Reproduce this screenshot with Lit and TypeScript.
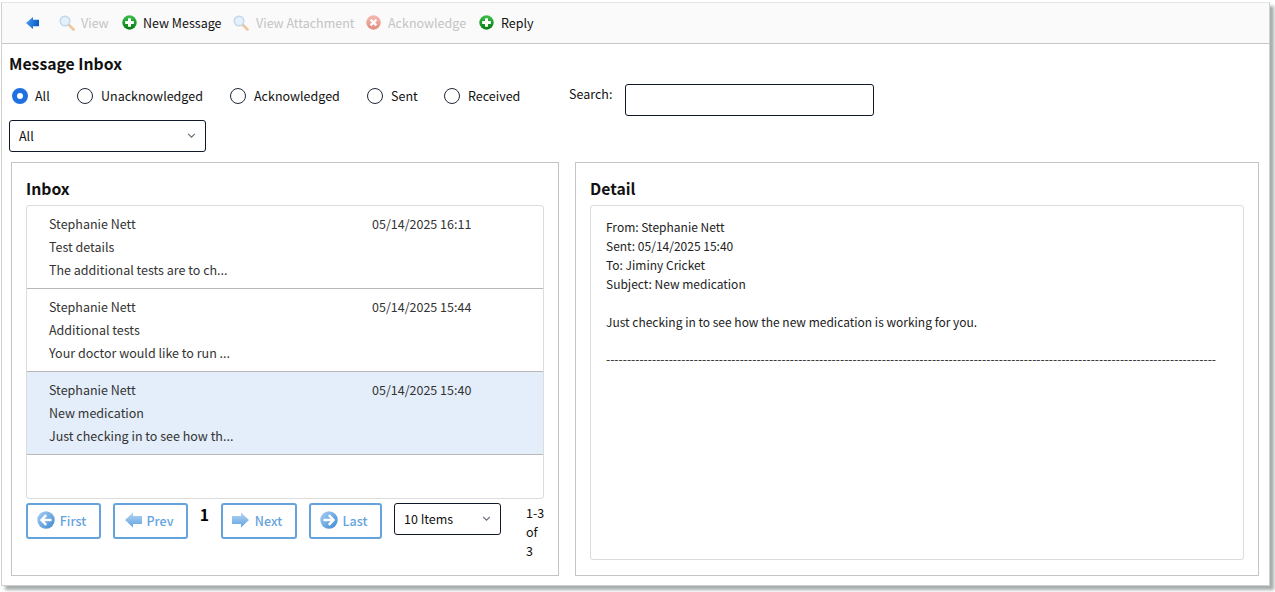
import { LitElement, html, css, svg } from "lit";
import { customElement } from "lit/decorators.js";

const defs = svg`<defs>
  <linearGradient id="blue" x1="0" y1="0" x2="1" y2="0.3"><stop offset="0" stop-color="#4fa0f0"/><stop offset="1" stop-color="#0b5fc8"/></linearGradient>
  <linearGradient id="soft" x1="0" y1="0" x2="0" y2="1"><stop offset="0" stop-color="#b5d6f4"/><stop offset="1" stop-color="#62a3e0"/></linearGradient>
  <linearGradient id="green" x1="0" y1="0" x2="0" y2="1"><stop offset="0" stop-color="#3cc04a"/><stop offset="1" stop-color="#067a12"/></linearGradient>
  <linearGradient id="red" x1="0" y1="0" x2="0" y2="1"><stop offset="0" stop-color="#f2907e"/><stop offset="1" stop-color="#d2432c"/></linearGradient>
  <linearGradient id="circ" x1="0" y1="0" x2="1" y2="1"><stop offset="0" stop-color="#a9d0f4"/><stop offset="1" stop-color="#3f88d2"/></linearGradient>
</defs>`;

const icons = {
  back: html`<svg width="16" height="16" viewBox="0 0 16 16"><path d="M1 8 L8 2 V4.8 H14 V11.2 H8 V14 Z" fill="url(#blue)"/></svg>`,
  prev: html`<svg width="18" height="18" viewBox="0 0 18 18"><path d="M1 9 L9 1.5 V5 H18 V13 H9 V16.5 Z" fill="url(#soft)"/></svg>`,
  next: html`<svg width="18" height="18" viewBox="0 0 18 18"><path d="M17 9 L9 1.5 V5 H0 V13 H9 V16.5 Z" fill="url(#soft)"/></svg>`,
  first: html`<svg width="18" height="18" viewBox="0 0 18 18"><circle cx="9" cy="9" r="8.7" fill="url(#circ)"/><path d="M9.2 4.2 L4.5 9 L9.2 13.8 M5 9 H14.5" fill="none" stroke="#fff" stroke-width="2.4"/></svg>`,
  last: html`<svg width="18" height="18" viewBox="0 0 18 18"><circle cx="9" cy="9" r="8.7" fill="url(#circ)"/><path d="M8.8 4.2 L13.5 9 L8.8 13.8 M13 9 H3.5" fill="none" stroke="#fff" stroke-width="2.4"/></svg>`,
  plus: html`<svg width="15" height="15" viewBox="0 0 15 15"><circle cx="7.5" cy="7.5" r="7.2" fill="url(#green)"/><path d="M7.5 3.2 V11.8 M3.2 7.5 H11.8" stroke="#fff" stroke-width="3"/></svg>`,
  x: html`<svg width="15" height="15" viewBox="0 0 15 15"><circle cx="7.5" cy="7.5" r="7.2" fill="url(#red)"/><path d="M4.6 4.6 L10.4 10.4 M10.4 4.6 L4.6 10.4" stroke="#fff" stroke-width="2.4"/></svg>`,
  mag: html`<svg width="16" height="16" viewBox="0 0 16 16"><path d="M9.5 9.5 L14.5 14.5" stroke="#e8a468" stroke-width="2.6" stroke-linecap="round"/><circle cx="6" cy="6" r="4.8" fill="#d6eafb" stroke="#9cc0e0" stroke-width="1.4"/></svg>`,
  chev: html`<svg class="chev" width="9" height="5" viewBox="0 0 10 6"><path d="M1 1 L5 5 L9 1" fill="none" stroke="#6b7280" stroke-width="1.5"/></svg>`,
};

const messages = [
  { from: "Stephanie Nett", date: "05/14/2025 16:11", subject: "Test details", body: "The additional tests are to ch..." },
  { from: "Stephanie Nett", date: "05/14/2025 15:44", subject: "Additional tests", body: "Your doctor would like to run ..." },
  { from: "Stephanie Nett", date: "05/14/2025 15:40", subject: "New medication", body: "Just checking in to see how th...", selected: true },
];

@customElement("app-root")
export class AppRoot extends LitElement {
  static styles = css`
    :host {
      display: block;
      width: 1275px;
      height: 592px;
      box-sizing: border-box;
      padding: 2px 5px 6px 1px;
      background: #fff;
      font-family: "Noto Sans CJK SC", "Noto Sans", sans-serif;
      font-size: 12.5px;
      color: #111;
      overflow: hidden;
    }
    .window {
      height: 100%;
      box-sizing: border-box;
      border: 1px solid #d0d0d0;
      border-top: 1px solid #e4e4e4;
      box-shadow: 4px 4px 3px #a8aeae;
      background: #fff;
      display: flex;
      flex-direction: column;
    }
    .toolbar {
      height: 41px;
      flex: none;
      box-sizing: border-box;
      background: #fafafa;
      border-bottom: 1px solid #c8c8c8;
      display: flex;
      align-items: center;
      padding: 0 0 1px 23px;
      line-height: 20px;
    }
    .tool { display: flex; align-items: center; gap: 6px; flex: none; }
    .tool.off { color: #c4c4c4; }
    .tool.off svg { opacity: 0.6; }
    .tool svg { flex: none; }
    .t1 { width: 34px; }
    .t2 { width: 63px; }
    .t3 { width: 111px; }
    .t4 { width: 133px; gap: 7px; }
    .t5 { width: 113px; gap: 7px; }
    .t6 { gap: 7px; }
    .main { flex: 1; min-height: 0; padding: 9px 10px 9px 7px; display: flex; flex-direction: column; }
    h1 { margin: 0; font-size: 15.75px; line-height: 22px; font-weight: 700; color: #111; }
    .filters { display: flex; align-items: flex-start; height: 36px; margin-top: 9px; }
    .radio { display: flex; align-items: center; gap: 8px; height: 22px; }
    .dot { width: 16px; height: 16px; margin-top: 1px; box-sizing: border-box; border: 1px solid #1f2937; border-radius: 50%; background: #fff; flex: none; }
    .dot.on { border: 5px solid #2070e0; }
    .r1 { width: 65px; margin-left: 3px; gap: 7px; }
    .r2 { width: 153px; }
    .r3 { width: 137px; }
    .r4 { width: 77px; }
    .r5 { width: 125px; }
    .slabel { height: 20px; line-height: 20px; width: 56px; }
    .search { width: 249px; height: 32px; box-sizing: border-box; border: 1px solid #111827; border-radius: 3px; background: #fff; }
    .select {
      box-sizing: border-box;
      border: 1px solid #111827;
      border-radius: 3px;
      background: #fff;
      display: flex;
      align-items: center;
      justify-content: space-between;
      padding: 0 9px 1px;
      flex: none;
    }
    .sel-all { width: 197px; height: 32px; }
    .panels { flex: 1; min-height: 0; display: flex; gap: 16px; margin: 10px 0 0 2px; }
    .panel {
      box-sizing: border-box;
      border: 1px solid #c4c4c4;
      padding: 14px 14px 0;
      display: flex;
      flex-direction: column;
    }
    .left { width: 548px; }
    .right { width: 684px; padding-bottom: 15px; }
    h2 { margin: 0 0 5px; font-size: 15.75px; line-height: 23px; font-weight: 700; color: #111; }
    .list { height: 294px; flex: none; box-sizing: border-box; border: 1px solid #dcdcdc; border-radius: 3px; overflow: hidden; }
    .msg {
      height: 83px;
      box-sizing: border-box;
      border-bottom: 1px solid #b8b8b8;
      padding: 6px 0 0 22px;
      display: grid;
      grid-template-columns: 323px 1fr;
      grid-auto-rows: 23px;
      line-height: 23px;
      color: #333;
    }
    .msg.sel { background: #e3eefa; }
    .msg .s { grid-column: 1 / 3; }
    .pager { display: flex; align-items: flex-start; margin-top: 4px; }
    .btn {
      box-sizing: border-box;
      height: 36px;
      border: 2px solid #65a3dc;
      border-radius: 3px;
      background: #fff;
      color: #65a3dc;
      font-weight: 500;
      display: flex;
      align-items: center;
      justify-content: center;
      gap: 5px;
      padding: 0 4px 2px 0;
      flex: none;
    }
    .b1 { width: 75px; margin-right: 12px; }
    .b2 { width: 75px; }
    .b3 { width: 76px; margin-right: 12px; }
    .b4 { width: 73px; margin-right: 12px; }
    .page { width: 33px; flex: none; text-align: center; font-weight: 700; font-size: 15.75px; line-height: 24px; color: #000; }
    .sel-items { width: 107px; height: 32px; }
    .count { width: 19px; flex: none; margin-left: 25px; line-height: 19px; color: #111; }
    .detail {
      flex: 1;
      min-height: 0;
      box-sizing: border-box;
      border: 1px solid #dcdcdc;
      border-radius: 3px;
      padding: 11px 15px;
      font-size: 12px;
      line-height: 19px;
      color: #222;
      overflow: hidden;
    }
    .detail div { min-height: 19px; white-space: nowrap; }
    .detail .rule { letter-spacing: 0.014px; line-height: 17px; }
  `;

  render() {
    return html`
      <svg width="0" height="0" style="position:absolute">${defs}</svg>
      <div class="window">
        <div class="toolbar">
          <div class="tool t1">${icons.back}</div>
          <div class="tool off t2">${icons.mag}<span>View</span></div>
          <div class="tool t3">${icons.plus}<span>New Message</span></div>
          <div class="tool off t4">${icons.mag}<span>View Attachment</span></div>
          <div class="tool off t5">${icons.x}<span>Acknowledge</span></div>
          <div class="tool t6">${icons.plus}<span>Reply</span></div>
        </div>
        <div class="main">
          <h1>Message Inbox</h1>
          <div class="filters">
            <label class="radio r1"><span class="dot on"></span>All</label>
            <label class="radio r2"><span class="dot"></span>Unacknowledged</label>
            <label class="radio r3"><span class="dot"></span>Acknowledged</label>
            <label class="radio r4"><span class="dot"></span>Sent</label>
            <label class="radio r5"><span class="dot"></span>Received</label>
            <div class="slabel">Search:</div>
            <div class="search"></div>
          </div>
          <div class="select sel-all"><span>All</span>${icons.chev}</div>
          <div class="panels">
            <section class="panel left">
              <h2>Inbox</h2>
              <div class="list">
                ${messages.map(
                  (m) => html`<div class="msg ${m.selected ? "sel" : ""}">
                    <span>${m.from}</span><span>${m.date}</span>
                    <span class="s">${m.subject}</span>
                    <span class="s">${m.body}</span>
                  </div>`
                )}
              </div>
              <div class="pager">
                <div class="btn b1">${icons.first}First</div>
                <div class="btn b2">${icons.prev}Prev</div>
                <div class="page">1</div>
                <div class="btn b3">${icons.next}Next</div>
                <div class="btn b4">${icons.last}Last</div>
                <div class="select sel-items"><span>10 Items</span>${icons.chev}</div>
                <div class="count">1-3 of 3</div>
              </div>
            </section>
            <section class="panel right">
              <h2>Detail</h2>
              <div class="detail">
                <div>From: Stephanie Nett</div>
                <div>Sent: 05/14/2025 15:40</div>
                <div>To: Jiminy Cricket</div>
                <div>Subject: New medication</div>
                <div></div>
                <div>Just checking in to see how the new medication is working for you.</div>
                <div></div>
                <div class="rule">${"-".repeat(146)}</div>
              </div>
            </section>
          </div>
        </div>
      </div>
    `;
  }
}
